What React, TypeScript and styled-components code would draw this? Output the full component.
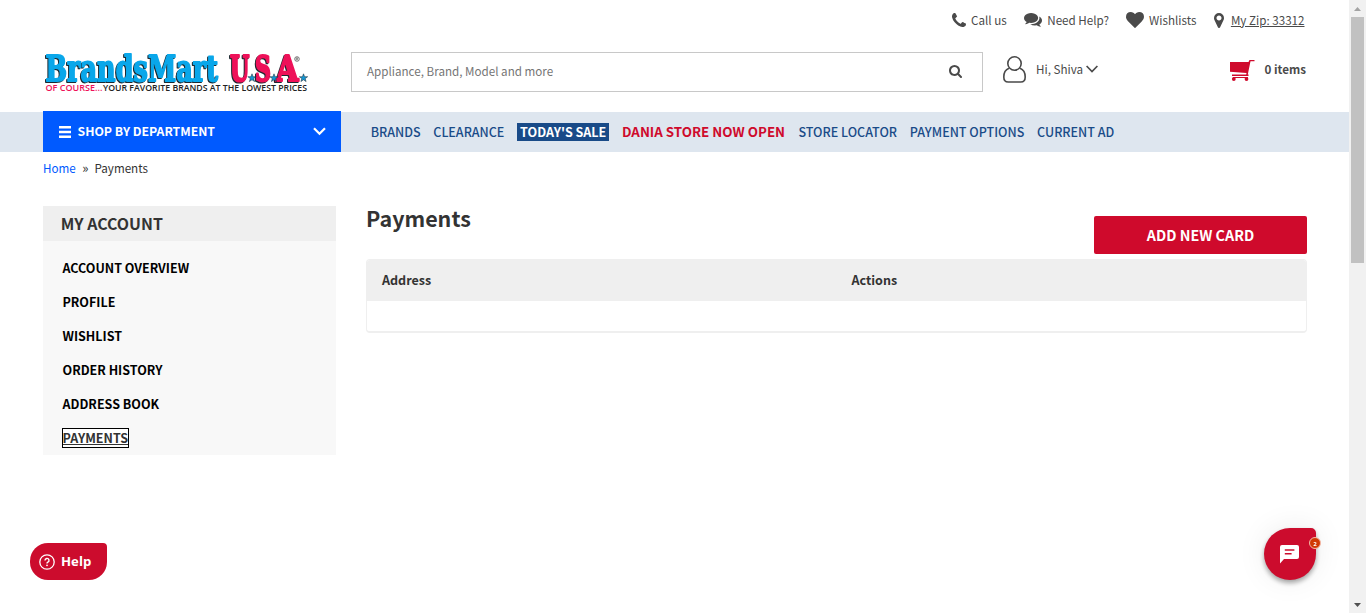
import React from "react";
import styled, { createGlobalStyle } from "styled-components";

const GlobalStyle = createGlobalStyle`
  * { box-sizing: border-box; }
  body {
    margin: 0;
    background: #fff;
    color: #4a4a4a;
    font: 400 11.64px/16px "Noto Sans CJK SC", "Open Sans", sans-serif;
    overflow: hidden;
  }
  svg { display: block; flex: none; }
`;

const Window = styled.div`
  display: flex;
  height: 613px;
`;
const Page = styled.div`
  flex: 1;
`;

/* Utility links */
const TopBar = styled.div`
  display: flex;
  justify-content: flex-end;
  height: 40px;
  padding: 0 44.5px 0 0;
`;
const TopLink = styled.a<{ $gap: number; $after?: number; $underline?: boolean }>`
  display: flex;
  align-items: center;
  height: 40px;
  gap: ${(p) => p.$gap}px;
  margin-right: ${(p) => p.$after ?? 0}px;
  white-space: nowrap;
  text-decoration: ${(p) => (p.$underline ? "underline" : "none")};
`;

/* Logo, search, account, cart */
const Header = styled.header`
  display: flex;
  height: 72px;
  padding: 12px 43px 0 43px;
`;
const LogoLink = styled.a`
  width: 308px;
  svg { overflow: visible; }
`;
const Wordmark = styled.g`
  font-family: "DejaVu Serif", serif;
  font-size: 34.5px;
  font-weight: 700;
  stroke-width: 1.8px;
  stroke-linejoin: round;
  filter: drop-shadow(-1px 1px 0 #1c2830);
`;
const SearchBox = styled.div`
  display: flex;
  align-items: center;
  justify-content: space-between;
  width: 632px;
  height: 40px;
  padding: 0 20px 2px 15px;
  border: 1px solid #c8c8c8;
  color: #757575;
`;
const Account = styled.div`
  display: flex;
  align-items: center;
  height: 35px;
  margin-left: 20px;
  svg:last-child { margin: 0 0 1px 3px; }
`;
const AccountName = styled.span`
  margin: 0 0 2px 10px;
`;
const Cart = styled.div`
  display: flex;
  align-items: center;
  gap: 10px;
  height: 36px;
  margin-left: auto;
  font-weight: 700;
  span { margin-bottom: 2px; }
`;

/* Navigation */
const NavBar = styled.nav`
  display: flex;
  height: 40px;
  padding-left: 43px;
  background: #dee6ef;
`;
const Departments = styled.div`
  display: flex;
  align-items: center;
  width: 298px;
  height: 41px;
  margin: -1px 29.7px 0 0;
  padding: 0 15.5px 0 16px;
  background: #005aff;
  color: #fff;
  font-size: 12.25px;
  font-weight: 700;
  span { flex: 1; margin: 0 0 2px 6.500px; }
`;
const NavLinks = styled.div`
  display: flex;
  align-items: center;
  gap: 12.8px;
  white-space: nowrap;
`;
const NavLink = styled.a<{ $tone?: "sale" | "alert" }>`
  color: #194b88;
  font-size: 12.53px;
  font-weight: 500;
  line-height: 18px;
  ${(p) => p.$tone === "sale" && "background: #194b88; color: #fff; font-weight: 700; padding: 0 2.9px;"}
  ${(p) => p.$tone === "alert" && "color: #cf0a2c; font-weight: 700; font-size: 13.33px; margin-right: 0.6px;"}
`;

const Breadcrumb = styled.div`
  display: flex;
  height: 54px;
  padding: 8px 0 0 43px;
  color: #333;
  a { color: #005aff; }
  i { width: 18.8px; font-size: 13px; font-style: normal; padding-left: 6.500px; }
`;

/* Account area */
const Content = styled.div`
  display: flex;
  gap: 30px;
  padding: 0 42px 0 43px;
`;
const Sidebar = styled.aside`
  width: 293px;
  height: 249px;
  background: #f8f8f8;
`;
const SidebarTitle = styled.h2`
  height: 35px;
  margin: 0;
  padding-left: 17.7px;
  background: #efefef;
  color: #333;
  font-size: 15.95px;
  font-weight: 700;
  line-height: 35px;
`;
const SideLinks = styled.ul`
  display: flex;
  flex-direction: column;
  gap: 14px;
  margin: 0;
  padding: 17px 0 0 19px;
  list-style: none;
`;
const SideLink = styled.li<{ $active?: boolean }>`
  align-self: flex-start;
  height: 20px;
  padding: 0 0.5px;
  color: ${(p) => (p.$active ? "#333" : "#000")};
  font-size: 12.5px;
  font-weight: 700;
  line-height: 20px;
  text-decoration: ${(p) => (p.$active ? "underline" : "none")};
  ${(p) => p.$active && "outline: 1px solid #000; outline-offset: -1px; background: #fff;"}
`;
const Main = styled.main`
  flex: 1;
`;
const TitleRow = styled.div`
  display: flex;
  justify-content: space-between;
  height: 53px;
`;
const Title = styled.h1`
  margin: 0;
  color: #333;
  font-size: 21.48px;
  font-weight: 700;
  line-height: 24px;
`;
const AddButton = styled.button`
  width: 213px;
  height: 38px;
  margin-top: 10px;
  padding: 0;
  border: 0;
  border-radius: 2px;
  background: #cf0a2c;
  color: #fff;
  font: 700 14.32px/38px "Noto Sans CJK SC", sans-serif;
`;
const Table = styled.div`
  height: 74px;
  border: 1px solid #efefef;
  border-bottom-width: 2px;
  border-radius: 4px;
  overflow: hidden;
`;
const TableHead = styled.div`
  display: grid;
  grid-template-columns: 1fr 1fr;
  height: 41px;
  background: #efefef;
  color: #333;
  font-size: 12.55px;
  font-weight: 700;
  line-height: 40px;
  span { padding-left: 15px; }
`;

/* Floating widgets */
const HelpButton = styled.button`
  position: fixed;
  left: 30px;
  bottom: 33px;
  display: flex;
  align-items: center;
  gap: 6px;
  width: 77px;
  height: 37px;
  padding: 0 0 0 9px;
  border: 0;
  border-radius: 18px 4px 18px 18px;
  background: #cc0c2d;
  color: #fff;
  font: 700 13.2px/20px "Open Sans", sans-serif;
  span { margin-bottom: 1px; }
`;
const ChatButton = styled.button`
  position: fixed;
  left: 1264px;
  top: 528px;
  display: flex;
  align-items: center;
  justify-content: center;
  width: 52px;
  height: 52px;
  padding: 0 1px 0 0;
  border: 0;
  border-radius: 26px 5px 26px 26px;
  background: #cc0c2d;
  box-shadow: 0 3px 5px rgba(0, 0, 0, 0.35), 0 0 30px rgba(0, 0, 0, 0.08);
`;
const Badge = styled.span`
  position: absolute;
  top: 9px;
  right: -5px;
  width: 12px;
  height: 12px;
  border: 1px solid #f3b9a6;
  border-radius: 50%;
  background: #d13a05;
  color: #fff;
  font: 700 6px/12px "Open Sans", sans-serif;
  text-align: center;
`;

const Scrollbar = styled.div`
  display: flex;
  flex-direction: column;
  align-items: center;
  width: 17px;
  background: #f1f1f1;
`;
const ScrollArrow = styled.div`
  display: flex;
  align-items: center;
  justify-content: center;
  height: 17px;
`;
const Thumb = styled.div`
  width: 13px;
  height: 246px;
  margin-bottom: auto;
  background: #c1c1c1;
`;

const Glyph = ({ box, w, h, d }: { box: string; w: number; h: number; d: string }) => (
  <svg viewBox={box} width={w} height={h} preserveAspectRatio="none" fill="#4a4a4a">
    <path d={d} />
  </svg>
);
const PHONE =
  "M1408 1240q0 27-10 70.500t-21 68.500q-21 50-122 106q-94 51-186 51q-27 0-53-3.500t-57-12.500t-47-14.500t-55.500-20.500t-49.500-18q-98-35-175-83q-127-79-264-216t-216-264q-48-77-83-175q-3-9-18-49.500t-20.500-55.500t-14.500-47t-12.500-57t-3.500-53q0-92 51-186q56-101 106-122q25-11 68.500-21t70.500-10q14 0 21 3q18 6 53 76q11 19 30 54t35 63.500t31 53.500q3 4 17.500 25t21.500 35.500t7 28.500q0 20-28.500 50t-62 55t-62 53t-28.500 46q0 9 5 22.500t8.500 20.500t14 24t11.500 19q76 137 174 235t235 174q2 1 19 11.500t24 14t20.500 8.500t22.500 5q18 0 46-28.500t53-62t55-62t50-28.500q14 0 28.500 7t35.500 21.500t25 17.500q25 15 53.500 31t63.500 35t54 30q70 35 76 53q3 7 3 21z";
const COMMENTS =
  "M1408 768q0 139-94 257t-256.500 186.500-353.500 68.500q-86 0-176-16-124 88-278 128-36 9-86 16h-3q-11 0-20.500-8t-11.500-21q-1-3-1-6.500t.500-6.500 2-6l2.500-5t3.500-5.500 4-5 4.500-5 4-4.500q5-6 23-25t26-29.500 22.500-29 25-38.500 20.500-44q-124-72-195-177t-71-224q0-139 94-257t256.500-186.500 353.500-68.500 353.500 68.500 256.500 186.500 94 257zm384 256q0 120-71 224.500t-195 176.500q10 24 20.500 44t25 38.500 22.500 29 26 29.500 23 25q1 1 4 4.500t4.500 5 4 5 3.500 5.500l2.500 5t2 6 .500 6.500-1 6.500q-3 14-13 22t-22 7q-50-7-86-16-154-40-278-128-90 16-176 16-271 0-472-132 58 4 88 4 161 0 309-45t264-129q125-92 192-212t67-254q0-77-23-152 129 71 204 178t75 230z";
const HEART =
  "M896 1664q-26 0-44-18l-624-602q-10-8-27.500-26t-55.500-65.500-68-97.500-53.500-121-23.500-138q0-220 127-344t351-124q62 0 126.500 21.500t120 58 95.500 68.500 76 68q36-36 76-68t95.500-68.500 120-58 126.500-21.500q224 0 351 124t127 344q0 221-229 450l-623 600q-18 18-44 18z";
const MARKER =
  "M1152 640q0-106-75-181t-181-75-181 75-75 181 75 181 181 75 181-75 75-181zm256 0q0 109-33 179l-364 774q-16 33-47.500 52t-67.500 19-67.500-19-46.500-52l-365-774q-33-70-33-179 0-212 150-362t362-150 362 150 150 362z";
const SEARCH =
  "M1216 832q0-185-131.500-316.500t-316.500-131.500-316.500 131.500-131.500 316.500 131.500 316.500 316.500 131.500 316.500-131.500 131.500-316.500zm512 832q0 52-38 90t-90 38q-54 0-90-38l-343-342q-179 124-399 124-143 0-273.500-55.500t-225-150-150-225-55.500-273.500 55.500-273.500 150-225 225-150 273.500-55.500 273.500 55.500 225 150 150 225 55.500 273.500q0 220-124 399l343 343q37 37 37 90z";

const Star = ({ x, y }: { x: number; y: number }) => (
  <path
    transform={`translate(${x} ${y})`}
    d="M0-4.200 1.100-1.300 4.200-1.300 1.700.600 2.600 3.600 0 1.800-2.600 3.600-1.700.600-4.200-1.300-1.100-1.300z"
    fill="#1596d2"
    stroke="#14232c"
    strokeWidth=".5"
  />
);

const Logo = () => (
  <svg width="268" height="44" viewBox="0 0 268 44">
    <Wordmark>
      <text x="2.500" y="28.500" fill="#0aa7ea" stroke="#0aa7ea" textLength="172.500" lengthAdjust="spacingAndGlyphs">
        BrandsMart
      </text>
      <g fill="#ee1159" stroke="#ee1159" strokeWidth="2.200">
        <text x="187" y="28.500" textLength="19.500" lengthAdjust="spacingAndGlyphs">U</text>
        <text x="212" y="28.500" textLength="16" lengthAdjust="spacingAndGlyphs">S</text>
        <text x="233" y="28.500" textLength="22.500" lengthAdjust="spacingAndGlyphs">A</text>
      </g>
    </Wordmark>
    <Star x={209} y={26} />
    <Star x={231} y={26} />
    <Star x={260.500} y={26} />
    <circle cx="254" cy="7" r="2.300" fill="none" stroke="#444" strokeWidth=".7" />
    <path d="M253.300 8.300V5.800h1.300v1.200h-1.300m.8 0 .7 1.300" fill="none" stroke="#444" strokeWidth=".5" />
    <g fontFamily="Open Sans, sans-serif" fontSize="9" fontWeight="600">
      <text x="2.500" y="39" fill="#ee1159" textLength="57" lengthAdjust="spacingAndGlyphs">OF COURSE...</text>
      <text x="60" y="39" fill="#222" textLength="204" lengthAdjust="spacingAndGlyphs">
        YOUR FAVORITE BRANDS AT THE LOWEST PRICES
      </text>
    </g>
  </svg>
);

const navItems: { label: string; tone?: "sale" | "alert" }[] = [
  { label: "BRANDS" },
  { label: "CLEARANCE" },
  { label: "TODAY'S SALE", tone: "sale" },
  { label: "DANIA STORE NOW OPEN", tone: "alert" },
  { label: "STORE LOCATOR" },
  { label: "PAYMENT OPTIONS" },
  { label: "CURRENT AD" },
];
const sideItems = ["ACCOUNT OVERVIEW", "PROFILE", "WISHLIST", "ORDER HISTORY", "ADDRESS BOOK", "PAYMENTS"];

export default function App() {
  return (
    <Window>
      <GlobalStyle />
      <Page>
        <TopBar>
          <TopLink $gap={5} $after={17.5}>
            <Glyph box="0 128 1408 1408" w={14} h={14} d={PHONE} />
            Call us
          </TopLink>
          <TopLink $gap={5} $after={17}>
            <Glyph box="0 256 1792 1536" w={18} h={15} d={COMMENTS} />
            Need Help?
          </TopLink>
          <TopLink $gap={5} $after={17.5}>
            <Glyph box="0 128 1792 1536" w={18} h={16} d={HEART} />
            Wishlists
          </TopLink>
          <TopLink $gap={7} $underline>
            <Glyph box="384 128 1024 1536" w={10} h={15} d={MARKER} />
            My Zip: 33312
          </TopLink>
        </TopBar>

        <Header>
          <LogoLink>
            <Logo />
          </LogoLink>
          <SearchBox>
            Appliance, Brand, Model and more
            <Glyph box="64 128 1664 1664" w={13} h={13} d={SEARCH} />
          </SearchBox>
          <Account>
            <svg width="23" height="27" viewBox="0 0 23 27" fill="none" stroke="#4a4a4a" strokeWidth="1.600">
              <circle cx="11.500" cy="7.500" r="6.700" />
              <path d="M6 12.300C2.500 13.600.8 17 .8 21c0 3 1.800 5 4.400 5h12.600c2.600 0 4.400-2 4.400-5 0-4-1.700-7.400-5.200-8.700" />
            </svg>
            <AccountName>Hi, Shiva</AccountName>
            <svg width="12" height="8" viewBox="0 0 12 8" fill="none" stroke="#4a4a4a" strokeWidth="1.700">
              <path d="M.6 1 6 6.500 11.400 1" />
            </svg>
          </Account>
          <Cart>
            <svg width="25" height="21" viewBox="0 0 25 21" fill="#cf0a2c">
              <path d="M0 2h18.500L19.500 0H24.500V1.300H20.500L17.800 14.500H18.500V16H2V14.500H16.200L16.500 13 0 11.800z" />
              <circle cx="3.800" cy="19" r="1.900" />
              <circle cx="16.500" cy="19" r="1.900" />
              <path d="M3 17h15v1H3z" />
            </svg>
            <span>0 items</span>
          </Cart>
        </Header>

        <NavBar>
          <Departments>
            <svg width="12" height="12" viewBox="0 0 12 12" fill="#fff">
              <path d="M0 0h12v2.500H0zM0 4.700h12v2.500H0zM0 9.400h12v2.500H0z" />
            </svg>
            <span>SHOP BY DEPARTMENT</span>
            <svg width="13" height="9" viewBox="0 0 13 9" fill="none" stroke="#fff" strokeWidth="2.200">
              <path d="M1 1.200 6.500 6.800 12 1.200" />
            </svg>
          </Departments>
          <NavLinks>
            {navItems.map((n) => (
              <NavLink key={n.label} $tone={n.tone}>{n.label}</NavLink>
            ))}
          </NavLinks>
        </NavBar>

        <Breadcrumb>
          <a>Home</a>
          <i>»</i>
          Payments
        </Breadcrumb>

        <Content>
          <Sidebar>
            <SidebarTitle>MY ACCOUNT</SidebarTitle>
            <SideLinks>
              {sideItems.map((s) => (
                <SideLink key={s} $active={s === "PAYMENTS"}>{s}</SideLink>
              ))}
            </SideLinks>
          </Sidebar>
          <Main>
            <TitleRow>
              <Title>Payments</Title>
              <AddButton>ADD NEW CARD</AddButton>
            </TitleRow>
            <Table>
              <TableHead>
                <span>Address</span>
                <span>Actions</span>
              </TableHead>
            </Table>
          </Main>
        </Content>
      </Page>

      <Scrollbar>
        <ScrollArrow>
          <svg width="7" height="4" viewBox="0 0 7 4" fill="#a3a3a3"><path d="M0 4 3.500 0 7 4z" /></svg>
        </ScrollArrow>
        <Thumb />
        <ScrollArrow>
          <svg width="7" height="4" viewBox="0 0 7 4" fill="#505050"><path d="M0 0h7L3.500 4z" /></svg>
        </ScrollArrow>
      </Scrollbar>

      <HelpButton>
        <svg width="16" height="16" viewBox="0 0 16 16" fill="none" stroke="#fff">
          <circle cx="8" cy="8" r="7.200" strokeWidth="1.300" />
          <path d="M6 6.500a2 2 0 1 1 2.900 1.700c-.6.300-.9.600-.9 1.200" strokeWidth="1.400" />
          <circle cx="8" cy="11.300" r=".9" fill="#fff" stroke="none" />
        </svg>
        <span>Help</span>
      </HelpButton>
      <ChatButton>
        <svg width="19" height="19" viewBox="0 0 19 19" fill="#fff">
          <path d="M2 0h15a2 2 0 0 1 2 2v10a2 2 0 0 1-2 2H4L0 18.500V2a2 2 0 0 1 2-2z" />
          <path d="M4.800 5h9.600M4.800 8.800h6.800" stroke="#cc0c2d" strokeWidth="1.400" />
        </svg>
        <Badge>2</Badge>
      </ChatButton>
    </Window>
  );
}
